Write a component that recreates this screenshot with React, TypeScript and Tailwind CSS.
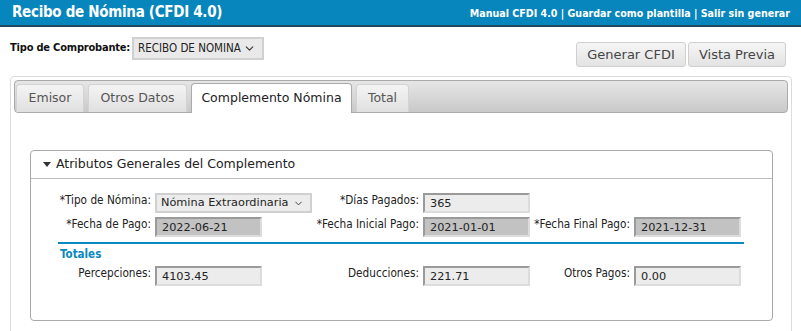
import { ChevronDown } from 'lucide-react';

const labelFont = { fontFamily: '"DejaVu Sans Condensed", "DejaVu Sans", sans-serif' };

function Field({ value, w, disabled }: { value: string; w: string; disabled?: boolean }) {
  return (
    <div
      className={`${w} h-[20px] flex items-center pl-[5px] pt-[2px] text-[11.3px] text-[#222] border-2 border-t-[#9a9a9a] border-l-[#9a9a9a] border-b-[#dcdcdc] border-r-[#dcdcdc] ${
        disabled ? 'bg-[#c2c2c2]' : 'bg-[#ececec]'
      }`}
    >
      {value}
    </div>
  );
}

function Label({ text, w }: { text: string; w: string }) {
  return (
    <div className={`${w} text-right pr-[4px] text-[11.7px] text-[#222] self-start -mt-[1px] whitespace-nowrap`} style={labelFont}>
      {text}
    </div>
  );
}

export default function App() {
  const tabs = [
    { name: 'Emisor', w: 'w-[68px]' },
    { name: 'Otros Datos', w: 'w-[99px]' },
    { name: 'Complemento Nómina', w: 'w-[161px]', active: true },
    { name: 'Total', w: 'w-[53px]' },
  ];

  return (
    <div className="w-[801px] h-[331px] overflow-hidden bg-white font-['DejaVu_Sans',sans-serif]">
      {/* Header bar */}
      <div className="h-[27px] bg-[#0786bd] border-b-2 border-[#1d4a5c] flex items-center justify-between pl-[12px] pr-[11px]">
        <div className="text-white font-bold text-[15px] tracking-[-0.3px]" style={labelFont}>
          Recibo de Nómina (CFDI 4.0)
        </div>
        <div className="text-white font-bold text-[10.6px] pt-[2px]" style={labelFont}>
          Manual CFDI 4.0 | Guardar como plantilla | Salir sin generar
        </div>
      </div>

      {/* Toolbar */}
      <div className="flex justify-between pl-[10px] pr-[15px] pt-[10px]">
        <div className="flex items-center gap-[2px] self-start">
          <span className="text-[11px] font-bold text-[#111] tracking-[-0.2px]" style={labelFont}>
            Tipo de Comprobante:
          </span>
          <div
            className="w-[132px] h-[23px] bg-[#e9e9e9] border-2 border-[#d0d0d0] flex items-center justify-between pl-[4px] pr-[6px] text-[11.5px] text-[#222] whitespace-nowrap"
            style={labelFont}
          >
            RECIBO DE NOMINA
            <ChevronDown className="w-[13px] h-[13px] text-[#333] shrink-0" strokeWidth={2} />
          </div>
        </div>
        <div className="flex gap-[2px] mt-[5px]">
          <button className="w-[110px] h-[25px] rounded-[3px] border border-[#cfcfcf] bg-gradient-to-b from-[#f5f5f5] to-[#e3e3e3] text-[13px] text-[#444]">
            Generar CFDI
          </button>
          <button className="w-[98px] h-[25px] rounded-[3px] border border-[#cfcfcf] bg-gradient-to-b from-[#f5f5f5] to-[#e3e3e3] text-[13px] text-[#444]">
            Vista Previa
          </button>
        </div>
      </div>

      {/* Tabs container */}
      <div className="mx-[10px] mt-[9px] w-[782px] h-[260px] border border-[#dcdcdc] rounded-[4px] p-[3px]">
        <div className="h-[33px] rounded-[4px] border border-[#aaaaaa] bg-gradient-to-b from-[#e6e6e6] to-[#c9c9c9] flex items-end gap-[4px] pl-[1px]">
          {tabs.map((t) =>
            t.active ? (
              <div
                key={t.name}
                className={`${t.w} h-[30px] -mb-[1px] bg-white border border-b-0 border-[#aaaaaa] rounded-t-[4px] flex items-center justify-center text-[12.5px] text-[#222]`}
              >
                {t.name}
              </div>
            ) : (
              <div
                key={t.name}
                className={`${t.w} h-[28px] bg-gradient-to-b from-[#f4f4f4] to-[#e0e0e0] border border-b-0 border-[#d3d3d3] rounded-t-[4px] flex items-center justify-center text-[12.5px] text-[#555]`}
              >
                {t.name}
              </div>
            ),
          )}
        </div>

        {/* Fieldset */}
        <div className="ml-[16px] mt-[37px] w-[743px] h-[171px] border border-[#a9a9a9] rounded-[4px]">
          <div className="h-[28px] border-b border-[#bdbdbd] flex items-center pl-[12px] gap-[5px] text-[12.5px] text-[#222]">
            <svg width="8" height="5" viewBox="0 0 8 5">
              <path d="M0 0 L8 0 L4 5 Z" fill="#333" />
            </svg>
            Atributos Generales del Complemento
          </div>

          <div className="pt-[14px]">
            <div className="flex items-center h-[20px]">
              <Label text="*Tipo de Nómina:" w="w-[124px]" />
              <div className="w-[157px] h-[20px] bg-[#ececec] border-2 border-[#d0d0d0] flex items-center justify-between pl-[4px] pr-[6px] pt-[1px] text-[11.3px] text-[#222] whitespace-nowrap">
                Nómina Extraordinaria
                <ChevronDown className="w-[11px] h-[11px] text-[#333] shrink-0" strokeWidth={2} />
              </div>
              <Label text="*Días Pagados:" w="w-[111px]" />
              <Field value="365" w="w-[107px]" />
            </div>
            <div className="flex items-center h-[20px] mt-[4px]">
              <Label text="*Fecha de Pago:" w="w-[124px]" />
              <Field value="2022-06-21" w="w-[107px]" disabled />
              <Label text="*Fecha Inicial Pago:" w="w-[161px]" />
              <Field value="2021-01-01" w="w-[107px]" disabled />
              <Label text="*Fecha Final Pago:" w="w-[104px]" />
              <Field value="2021-12-31" w="w-[107px]" disabled />
            </div>

            <div className="ml-[27px] mr-[28px] mt-[5px] h-[2px] bg-[#0a88c0]" />
            <div className="ml-[29px] mt-[3px] text-[11.5px] font-bold text-[#0a88c0] leading-[14px]" style={labelFont}>
              Totales
            </div>

            <div className="flex items-center h-[20px] mt-[5px]">
              <Label text="Percepciones:" w="w-[124px]" />
              <Field value="4103.45" w="w-[107px]" />
              <Label text="Deducciones:" w="w-[161px]" />
              <Field value="221.71" w="w-[107px]" />
              <Label text="Otros Pagos:" w="w-[104px]" />
              <Field value="0.00" w="w-[107px]" />
            </div>
          </div>
        </div>
      </div>
    </div>
  );
}
